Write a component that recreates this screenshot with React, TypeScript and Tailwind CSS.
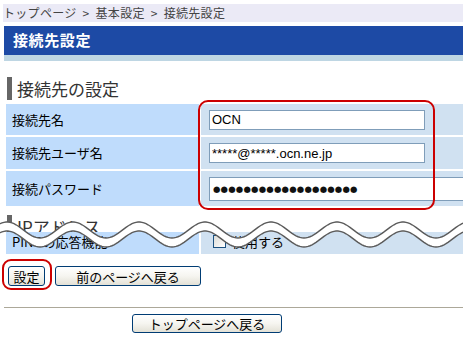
import React from 'react'

const jp = { fontFamily: '"Noto Sans CJK JP", "Noto Sans", sans-serif' }
const latin = { fontFamily: '"Liberation Sans", "Noto Sans CJK JP", sans-serif' }

// wave cut drawn across the page
function wavePoints(offset: number) {
  const pts: string[] = []
  for (let x = -2; x <= 466; x += 2) {
    const y = 24 + offset - 8 * Math.cos((2 * Math.PI * (x - 7)) / 66)
    pts.push(`${x},${y.toFixed(2)}`)
  }
  return pts
}

function WaveCut() {
  const top = wavePoints(0)
  const bottom = wavePoints(9)
  const fill = `M${top.join(' L')} L${[...bottom].reverse().join(' L')} Z`
  return (
    <svg
      className="pointer-events-none absolute left-0 top-0 z-10"
      width="463"
      height="48"
      viewBox="0 0 463 48"
    >
      <path d={fill} fill="#ffffff" />
      <path d={`M${top.join(' L')}`} fill="none" stroke="#5a5a5a" strokeWidth="1.4" />
      <path d={`M${bottom.join(' L')}`} fill="none" stroke="#5a5a5a" strokeWidth="1.4" />
    </svg>
  )
}

function XpButton({ children, className }: { children: React.ReactNode; className?: string }) {
  return (
    <button
      type="button"
      className={
        'flex items-center justify-center rounded-[3px] border border-[#003c74] bg-gradient-to-b from-white via-[#f6f5f0] to-[#e3e1d6] text-[13px] leading-none text-black ' +
        (className ?? '')
      }
      style={jp}
    >
      {children}
    </button>
  )
}

function Row({
  label,
  height,
  children,
}: {
  label: string
  height: string
  children: React.ReactNode
}) {
  return (
    <div className={'flex gap-[2px] ' + height}>
      <div className="flex w-[193px] items-center bg-[#bfdcfc] pl-[6px] text-[13px] text-black" style={jp}>
        {label}
      </div>
      <div className="flex flex-1 items-center overflow-hidden bg-[#d0e1f1] pl-[8px]">{children}</div>
    </div>
  )
}

export default function App() {
  return (
    <div className="h-[340px] w-[463px] overflow-hidden bg-white">
      {/* Breadcrumb */}
      <div
        className="ml-[3px] mt-[4px] flex h-[18px] items-center bg-[#ebeaf6] text-[12px] tracking-[0.3px] text-[#444]"
        style={jp}
      >
        <span>トップページ</span>
        <span className="mx-[6px]">&gt;</span>
        <span>基本設定</span>
        <span className="mx-[6px]">&gt;</span>
        <span>接続先設定</span>
      </div>

      {/* Title bar */}
      <div className="ml-[4px] mt-[4px]">
        <div
          className="flex h-[29px] items-center bg-[#1d4aa5] pl-[9px] text-[15px] font-bold tracking-[0.6px] text-white"
          style={jp}
        >
          接続先設定
        </div>
        <div className="h-[6px] bg-[#bed6e3]" />
      </div>

      {/* Section heading */}
      <div className="ml-[7px] mt-[16px] flex h-[23px] items-center gap-[5px]">
        <div className="h-[23px] w-[5px] bg-[#666]" />
        <span className="text-[17px] leading-none text-[#333]" style={jp}>
          接続先の設定
        </span>
      </div>

      {/* Settings table */}
      <div className="relative ml-[6px] mt-[4px] flex flex-col gap-[2px]">
        <Row label="接続先名" height="h-[31px]">
          <input
            readOnly
            value="OCN"
            className="h-[20px] w-[216px] border border-[#7f9db9] bg-white px-[2px] text-[13px] text-black outline-none"
            style={latin}
          />
        </Row>
        <Row label="接続先ユーザ名" height="h-[32px]">
          <input
            readOnly
            value="*****@*****.ocn.ne.jp"
            className="h-[20px] w-[216px] border border-[#7f9db9] bg-white px-[2px] text-[13px] text-black outline-none"
            style={latin}
          />
        </Row>
        <Row label="接続パスワード" height="h-[35px]">
          <input
            readOnly
            value={'●'.repeat(19)}
            className="h-[24px] w-[262px] shrink-0 border border-[#7f9db9] bg-white px-[3px] text-[8.5px] tracking-[0.2px] text-[#111] outline-none"
            style={{ fontFamily: '"DejaVu Sans", sans-serif' }}
          />
        </Row>
        <div className="pointer-events-none absolute left-[192px] top-[-4px] z-20 h-[110px] w-[237px] rounded-[10px] border-2 border-[#cc0000]" />
      </div>

      {/* Cut region */}
      <div className="relative h-[48px]">
        <div className="h-[26px] overflow-hidden">
          <div className="ml-[7px] mt-[9px] flex h-[23px] items-center gap-[5px]">
            <div className="h-[23px] w-[5px] bg-[#666]" />
            <span className="text-[17px] leading-none text-[#333]" style={jp}>
              IPアドレス
            </span>
          </div>
        </div>
        <div className="ml-[6px] flex h-[22px] gap-[2px]">
          <div
            className="flex w-[193px] items-end bg-[#bfdcfc] pb-[6px] pl-[6px] text-[13px] leading-[13px] text-black"
            style={jp}
          >
            PINGの応答機能
          </div>
          <div className="flex flex-1 items-end gap-[6px] bg-[#d0e1f1] pb-[6px] pl-[12px]">
            <span className="h-[13px] w-[13px] border border-[#1c5180] bg-gradient-to-br from-[#dcdcd7] to-white" />
            <span className="text-[13px] leading-[13px] text-black" style={jp}>
              使用する
            </span>
          </div>
        </div>
        <WaveCut />
      </div>

      {/* Buttons */}
      <div className="relative ml-[8px] mt-[12px] flex gap-[10px]">
        <XpButton className="h-[20px] w-[37px]">設定</XpButton>
        <XpButton className="h-[20px] w-[146px]">前のページへ戻る</XpButton>
        <div className="pointer-events-none absolute left-[-6px] top-[-7px] h-[31px] w-[50px] rounded-[9px] border-2 border-[#cc0000]" />
      </div>

      <div className="ml-[4px] mt-[21px] h-[1px] bg-[#aca899]" />

      <div className="ml-[132px] mt-[6px]">
        <XpButton className="h-[19px] w-[150px]">トップページへ戻る</XpButton>
      </div>
    </div>
  )
}
